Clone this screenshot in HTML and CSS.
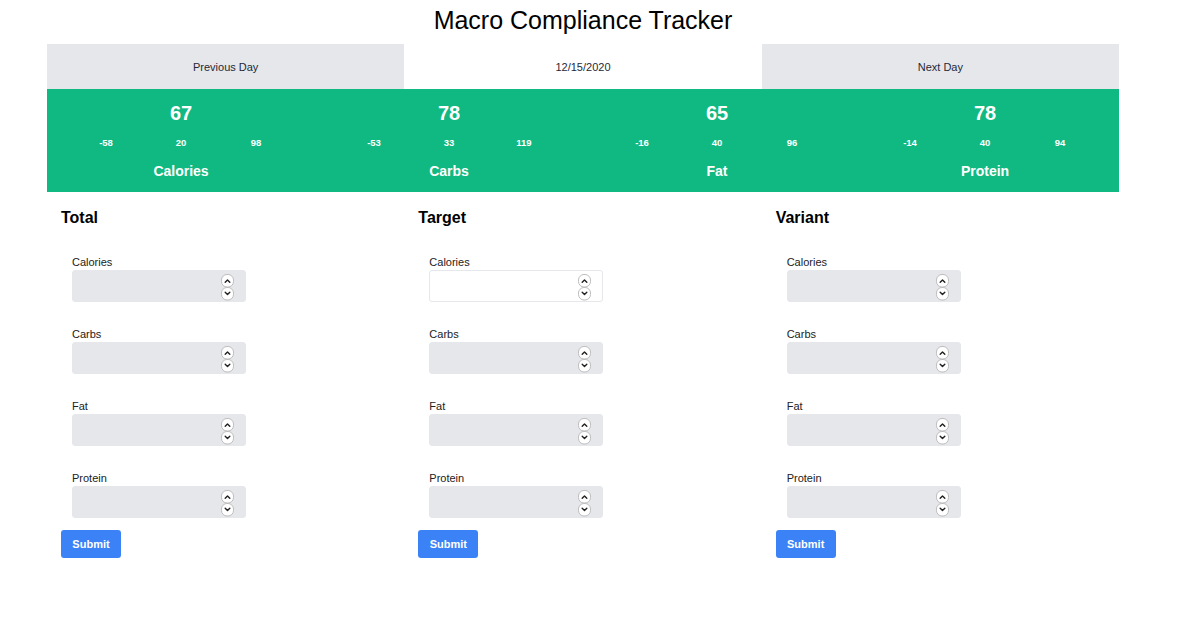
FILE: index.html
```html
<!DOCTYPE html>
<html lang="en">
<head>
<meta charset="utf-8">
<title>Macro Compliance Tracker</title>
<link rel="stylesheet" href="styles.css">
</head>
<body>
<svg width="0" height="0" style="position:absolute">
  <defs>
    <symbol id="spin" viewBox="0 0 13 27">
      <rect x="0.5" y="0.5" width="12" height="12.5" rx="5.5" fill="#fff" stroke="#bdbdbd"/>
      <path d="M4.2 8.3 L6.5 6 L8.8 8.3" fill="none" stroke="#222" stroke-width="1.4" stroke-linecap="round" stroke-linejoin="round"/>
      <rect x="0.5" y="13.5" width="12" height="12.5" rx="5.5" fill="#fff" stroke="#bdbdbd"/>
      <path d="M4.2 18.2 L6.5 20.5 L8.8 18.2" fill="none" stroke="#222" stroke-width="1.4" stroke-linecap="round" stroke-linejoin="round"/>
    </symbol>
  </defs>
</svg>
<div class="app">
  <h1 class="title">Macro Compliance Tracker</h1>
  <nav class="daynav">
    <button class="daynav__btn">Previous Day</button>
    <div class="daynav__date">12/15/2020</div>
    <button class="daynav__btn">Next Day</button>
  </nav>
  <section class="summary">
    <div class="macro">
      <div class="macro__value">67</div>
      <div class="macro__range"><span>-58</span><span>20</span><span>98</span></div>
      <div class="macro__name">Calories</div>
    </div>
    <div class="macro">
      <div class="macro__value">78</div>
      <div class="macro__range"><span>-53</span><span>33</span><span>119</span></div>
      <div class="macro__name">Carbs</div>
    </div>
    <div class="macro">
      <div class="macro__value">65</div>
      <div class="macro__range"><span>-16</span><span>40</span><span>96</span></div>
      <div class="macro__name">Fat</div>
    </div>
    <div class="macro">
      <div class="macro__value">78</div>
      <div class="macro__range"><span>-14</span><span>40</span><span>94</span></div>
      <div class="macro__name">Protein</div>
    </div>
  </section>
  <section class="forms">
    <form class="panel">
      <h2 class="panel__title">Total</h2>
      <label class="field"><span class="field__label">Calories</span><span class="field__box"><input class="field__input" type="number"><svg class="spin"><use href="#spin"/></svg></span></label>
      <label class="field"><span class="field__label">Carbs</span><span class="field__box"><input class="field__input" type="number"><svg class="spin"><use href="#spin"/></svg></span></label>
      <label class="field"><span class="field__label">Fat</span><span class="field__box"><input class="field__input" type="number"><svg class="spin"><use href="#spin"/></svg></span></label>
      <label class="field"><span class="field__label">Protein</span><span class="field__box"><input class="field__input" type="number"><svg class="spin"><use href="#spin"/></svg></span></label>
      <button class="submit" type="button">Submit</button>
    </form>
    <form class="panel">
      <h2 class="panel__title">Target</h2>
      <label class="field"><span class="field__label">Calories</span><span class="field__box"><input class="field__input" type="number" autofocus><svg class="spin"><use href="#spin"/></svg></span></label>
      <label class="field"><span class="field__label">Carbs</span><span class="field__box"><input class="field__input" type="number"><svg class="spin"><use href="#spin"/></svg></span></label>
      <label class="field"><span class="field__label">Fat</span><span class="field__box"><input class="field__input" type="number"><svg class="spin"><use href="#spin"/></svg></span></label>
      <label class="field"><span class="field__label">Protein</span><span class="field__box"><input class="field__input" type="number"><svg class="spin"><use href="#spin"/></svg></span></label>
      <button class="submit" type="button">Submit</button>
    </form>
    <form class="panel">
      <h2 class="panel__title">Variant</h2>
      <label class="field"><span class="field__label">Calories</span><span class="field__box"><input class="field__input" type="number"><svg class="spin"><use href="#spin"/></svg></span></label>
      <label class="field"><span class="field__label">Carbs</span><span class="field__box"><input class="field__input" type="number"><svg class="spin"><use href="#spin"/></svg></span></label>
      <label class="field"><span class="field__label">Fat</span><span class="field__box"><input class="field__input" type="number"><svg class="spin"><use href="#spin"/></svg></span></label>
      <label class="field"><span class="field__label">Protein</span><span class="field__box"><input class="field__input" type="number"><svg class="spin"><use href="#spin"/></svg></span></label>
      <button class="submit" type="button">Submit</button>
    </form>
  </section>
</div>
</body>
</html>
```

FILE: styles.css
```css
* { box-sizing: border-box; }
html, body { margin: 0; padding: 0; background: #fff; }
body {
  font-family: "Liberation Sans", Arial, sans-serif;
  color: #111;
}
.app {
  width: 1072px;
  margin-left: 47px;
}
.title {
  margin: 0;
  height: 44px;
  font-size: 25px;
  font-weight: 400;
  line-height: 40px;
  text-align: center;
  color: #000;
}
.daynav {
  display: grid;
  grid-template-columns: repeat(3, 1fr);
  height: 45px;
}
.daynav__btn, .daynav__date {
  display: flex;
  align-items: center;
  justify-content: center;
  font-family: inherit;
  font-size: 11px;
  color: #1f2937;
  border: 0;
  margin: 0;
  padding: 0;
}
.daynav__btn { background: #e5e7eb; }
.daynav__date { background: #fff; }

.summary {
  display: grid;
  grid-template-columns: repeat(4, 1fr);
  background: #10b981;
  color: #fff;
  padding: 10px 0 11px;
}
.macro {
  display: flex;
  flex-direction: column;
  align-items: center;
  font-weight: 700;
}
.macro__value {
  font-size: 20px;
  line-height: 28px;
}
.macro__range {
  display: grid;
  grid-template-columns: repeat(3, 75px);
  margin-top: 9px;
  font-size: 9.5px;
  line-height: 14px;
  text-align: center;
}
.macro__name {
  margin-top: 11px;
  font-size: 14px;
  line-height: 20px;
}

.forms {
  display: grid;
  grid-template-columns: repeat(3, 1fr);
}
.panel {
  padding: 14px 14px 0;
  display: flex;
  flex-direction: column;
  align-items: flex-start;
}
.panel__title {
  margin: 0 0 24px;
  font-size: 16px;
  line-height: 24px;
  font-weight: 700;
  color: #000;
}
.field {
  display: flex;
  flex-direction: column;
  margin-left: 11px;
  margin-bottom: 24px;
}
.field:last-of-type { margin-bottom: 12px; }
.field__label {
  font-size: 11px;
  line-height: 16px;
  color: #222;
}
.field__box {
  position: relative;
  display: block;
  width: 174px;
  height: 32px;
}
.field__input {
  display: block;
  width: 174px;
  height: 32px;
  padding: 0 12px;
  border: 1px solid #e5e7eb;
  border-radius: 3px;
  background: #e5e7eb;
  font-family: inherit;
  font-size: 13px;
  color: #111;
  outline: none;
  -moz-appearance: textfield;
}
.field__input::-webkit-inner-spin-button,
.field__input::-webkit-outer-spin-button {
  -webkit-appearance: none;
  margin: 0;
}
.field__input:focus {
  background: #fff;
  border-color: #e5e7eb;
}
.spin {
  position: absolute;
  right: 12px;
  top: 4px;
  width: 13px;
  height: 27px;
  pointer-events: none;
}
.submit {
  width: 60px;
  height: 28px;
  border: 0;
  border-radius: 3px;
  background: #3b82f6;
  color: #fff;
  font-family: inherit;
  font-size: 11px;
  font-weight: 700;
  padding: 0;
}
```
